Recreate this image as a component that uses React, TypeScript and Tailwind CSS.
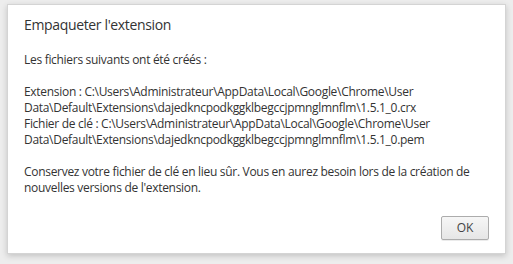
export default function App() {
  return (
    <div className="w-[513px] h-[264px] bg-[#ededed] pt-[4px] pl-[7px] font-['Open_Sans',sans-serif] text-[#333333]">
      <div className="w-[499px] h-[250px] bg-white border border-[#d4d4d4] shadow-[0_2px_6px_rgba(0,0,0,0.18)] flex flex-col px-[16px] pt-[10px] pb-[13px]">
        <h1 className="text-[14px] leading-[20px] font-normal tracking-[-0.35px] text-[#333333]">Empaqueter l'extension</h1>
        <div className="mt-[17px] text-[12px] leading-[16px] tracking-[-0.3px]">
          <p>Les fichiers suivants ont été créés :</p>
          <p className="mt-[16px]">
            Extension : C:\Users\Administrateur\AppData\Local\Google\Chrome\User
            <br />
            Data\Default\Extensions\dajedkncpodkggklbegccjpmnglmnflm\1.5.1_0.crx
            <br />
            Fichier de clé : C:\Users\Administrateur\AppData\Local\Google\Chrome\User
            <br />
            Data\Default\Extensions\dajedkncpodkggklbegccjpmnglmnflm\1.5.1_0.pem
          </p>
          <p className="mt-[16px]">
            Conservez votre fichier de clé en lieu sûr. Vous en aurez besoin lors de la création de
            <br />
            nouvelles versions de l'extension.
          </p>
        </div>
        <div className="mt-auto flex justify-end">
          <button className="w-[48px] h-[24px] rounded-[2px] border border-[#acacac] bg-gradient-to-b from-[#f6f6f6] to-[#e6e6e6] text-[12px] text-[#444444] shadow-[0_1px_0_rgba(0,0,0,0.08)]">
            OK
          </button>
        </div>
      </div>
    </div>
  );
}
